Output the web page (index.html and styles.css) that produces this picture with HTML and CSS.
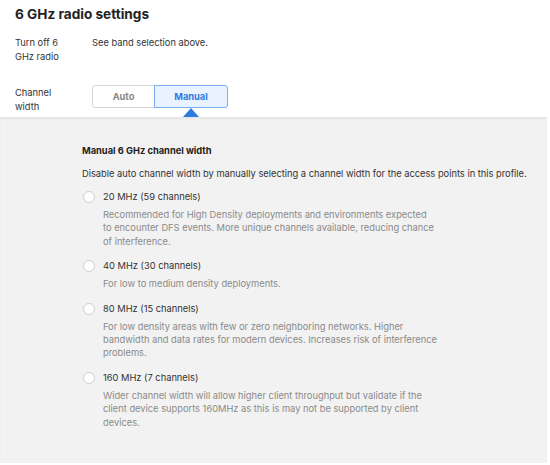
FILE: index.html
```html
<!DOCTYPE html>
<html lang="en">
<head>
    <meta charset="UTF-8">
    <meta name="viewport" content="width=device-width, initial-scale=1.0">
    <title>6 GHz radio settings</title>
    <link rel="stylesheet" href="styles.css">
</head>
<body>
    <div class="settings">
        <h2 class="title">6 GHz radio settings</h2>
        <div class="field">
            <div class="label">Turn off 6 GHz radio</div>
            <div class="value">See band selection above.</div>
        </div>
        <div class="field field-width">
            <div class="label">Channel width</div>
            <div class="segmented">
                <button class="seg">Auto</button>
                <button class="seg active">Manual</button>
            </div>
        </div>
    </div>

    <div class="panel">
        <h3 class="panel-title">Manual 6 GHz channel width</h3>
        <p class="panel-desc">Disable auto channel width by manually selecting a channel width for the access points in this profile.</p>

        <label class="option">
            <span class="radio"></span>
            <span class="option-body">
                <span class="option-name">20 MHz (59 channels)</span>
                <span class="option-help">Recommended for High Density deployments and environments expected to encounter DFS events. More unique channels available, reducing chance of interference.</span>
            </span>
        </label>
        <label class="option">
            <span class="radio"></span>
            <span class="option-body">
                <span class="option-name">40 MHz (30 channels)</span>
                <span class="option-help">For low to medium density deployments.</span>
            </span>
        </label>
        <label class="option">
            <span class="radio"></span>
            <span class="option-body">
                <span class="option-name">80 MHz (15 channels)</span>
                <span class="option-help">For low density areas with few or zero neighboring networks. Higher bandwidth and data rates for modern devices. Increases risk of interference problems.</span>
            </span>
        </label>
        <label class="option">
            <span class="radio"></span>
            <span class="option-body">
                <span class="option-name">160 MHz (7 channels)</span>
                <span class="option-help">Wider channel width will allow higher client throughput but validate if the client device supports 160MHz as this is may not be supported by client devices.</span>
            </span>
        </label>
    </div>
</body>
</html>
```

FILE: styles.css
```css
body {
    margin: 0;
    font-family: 'Inter', 'Liberation Sans', sans-serif;
    font-size: 9.3px;
    color: #333;
    background-color: #fff;
    width: 550px;
    height: 465px;
    overflow: hidden;
}

.settings {
    padding: 5px 15px 0 15px;
    height: 112px;
    box-sizing: content-box;
}

.title {
    margin: 0 0 13px 0;
    font-size: 13.6px;
    font-weight: 700;
    color: #222;
    line-height: 18px;
}

.field {
    display: flex;
    line-height: 13.5px;
}

.label {
    width: 60px;
    flex: none;
    margin-right: 17px;
}

.field-width {
    margin-top: 23px;
}

.segmented {
    display: flex;
    margin-top: -1px;
}

.seg {
    height: 23px;
    font-family: inherit;
    font-size: 9.3px;
    font-weight: 700;
    color: #888;
    background-color: #fff;
    border: 1px solid #d6d6d6;
    padding: 0;
    width: 63px;
    border-radius: 3px 0 0 3px;
}

.seg.active {
    position: relative;
    width: 74px;
    color: #2f7ae0;
    background-color: #e9f2fe;
    border-color: #79aef0;
    border-radius: 0 3px 3px 0;
    margin-left: -1px;
}

.seg.active::after {
    content: '';
    position: absolute;
    left: 50%;
    bottom: -10px;
    margin-left: -8px;
    border-left: 8px solid transparent;
    border-right: 8px solid transparent;
    border-bottom: 9px solid #2f7ae0;
}

.panel {
    width: 547px;
    height: 346px;
    box-sizing: border-box;
    background-color: #f2f2f2;
    box-shadow: inset 0 2px 2px rgba(0, 0, 0, 0.05);
    padding: 27px 10px 0 82px;
}

.panel-title {
    margin: 0;
    font-size: 9.3px;
    font-weight: 700;
    color: #222;
    line-height: 13px;
}

.panel-desc {
    margin: 10px 0 10px 0;
    line-height: 13px;
    color: #333;
}

.option {
    display: flex;
    margin-bottom: 11px;
}

.radio {
    flex: none;
    width: 10px;
    height: 10px;
    border: 1px solid #cfcfcf;
    border-radius: 50%;
    background-color: #fff;
    margin: 1px 8px 0 1px;
}

.option-body {
    display: flex;
    flex-direction: column;
    width: 334px;
}

.option-name {
    line-height: 13px;
    color: #333;
    margin-bottom: 5px;
}

.option-help {
    line-height: 13.4px;
    color: #8a8a8a;
}
```
